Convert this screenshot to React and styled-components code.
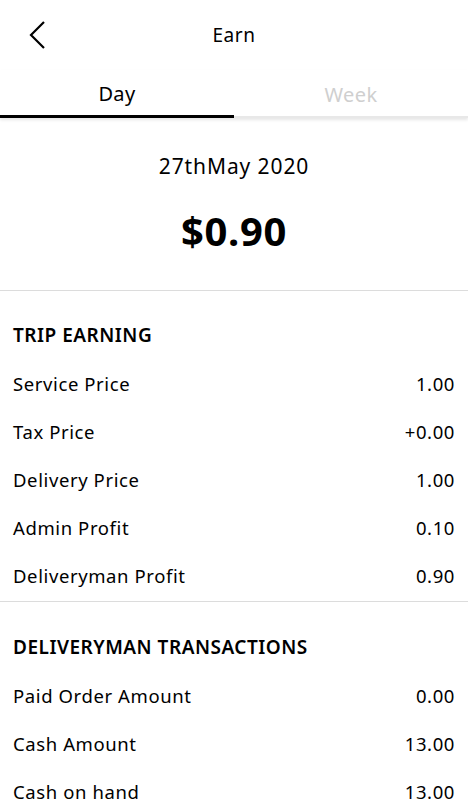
import React from "react";
import styled, { createGlobalStyle } from "styled-components";

const Global = createGlobalStyle`
    body {
        margin: 0;
        background: #fff;
        font-family: "Noto Sans", "Open Sans", sans-serif;
        color: #000;
    }
`;

const Screen = styled.div`
    width: 468px;
    height: 800px;
    overflow: hidden;
    background: #fff;
`;

const Header = styled.div`
    height: 70px;
    display: flex;
    align-items: center;
    justify-content: center;
    position: relative;
`;

const Back = styled.button`
    position: absolute;
    left: 22px;
    top: 18px;
    border: 0;
    background: none;
    padding: 0;
    width: 30px;
    height: 34px;
    display: flex;
    align-items: center;
    justify-content: center;
`;

const Title = styled.div`
    font-size: 19px;
    letter-spacing: 0.6px;
    color: #000;
`;

const Tabs = styled.div`
    display: flex;
    box-shadow: 0 2px 3px rgba(0, 0, 0, 0.1);
`;

const Tab = styled.div`
    flex: 1;
    height: 48px;
    display: flex;
    align-items: center;
    justify-content: center;
    font-size: 20px;
    letter-spacing: 0.4px;
    color: ${(props) => (props.active ? "#000" : "#cfcfcf")};
    border-bottom: ${(props) => (props.active ? "3px solid #000" : "2px solid #e8e8e8")};
    box-sizing: border-box;
    padding-top: 2px;
`;

const Summary = styled.div`
    display: flex;
    flex-direction: column;
    align-items: center;
    padding-top: 34px;
    height: 173px;
    box-sizing: border-box;
    border-bottom: 1px solid #dcdcdc;
`;

const DateText = styled.div`
    font-size: 21px;
    letter-spacing: 0.9px;
    line-height: 28px;
`;

const Amount = styled.div`
    font-size: 40px;
    font-weight: 700;
    letter-spacing: 0.6px;
    line-height: 52px;
    margin-top: 25px;
`;

const Section = styled.div`
    padding: ${(props) => props.top}px 13px ${(props) => (props.divider ? 2 : 0)}px;
    border-bottom: ${(props) => (props.divider ? "1px solid #dcdcdc" : "none")};
`;

const SectionTitle = styled.div`
    font-size: 19px;
    font-weight: 600;
    letter-spacing: 0.5px;
    line-height: 32px;
    margin-bottom: 8px;
`;

const Row = styled.div`
    display: flex;
    justify-content: space-between;
    align-items: center;
    height: 48px;
    font-size: 18.5px;
    letter-spacing: 0.6px;
`;

const tripRows = [
    ["Service Price", "1.00"],
    ["Tax Price", "+0.00"],
    ["Delivery Price", "1.00"],
    ["Admin Profit", "0.10"],
    ["Deliveryman Profit", "0.90"],
];

const txRows = [
    ["Paid Order Amount", "0.00"],
    ["Cash Amount", "13.00"],
    ["Cash on hand", "13.00"],
];

export default function App() {
    return (
        <Screen>
            <Global />
            <Header>
                <Back>
                    <svg width="18" height="30" viewBox="0 0 18 30">
                        <path d="M16 2 L3 15 L16 28" fill="none" stroke="#000" strokeWidth="2.2" />
                    </svg>
                </Back>
                <Title>Earn</Title>
            </Header>
            <Tabs>
                <Tab active>Day</Tab>
                <Tab>Week</Tab>
            </Tabs>
            <Summary>
                <DateText>27thMay 2020</DateText>
                <Amount>$0.90</Amount>
            </Summary>
            <Section divider top={28}>
                <SectionTitle>TRIP EARNING</SectionTitle>
                {tripRows.map(([label, value]) => (
                    <Row key={label}>
                        <span>{label}</span>
                        <span>{value}</span>
                    </Row>
                ))}
            </Section>
            <Section top={29}>
                <SectionTitle>DELIVERYMAN TRANSACTIONS</SectionTitle>
                {txRows.map(([label, value]) => (
                    <Row key={label}>
                        <span>{label}</span>
                        <span>{value}</span>
                    </Row>
                ))}
            </Section>
        </Screen>
    );
}
